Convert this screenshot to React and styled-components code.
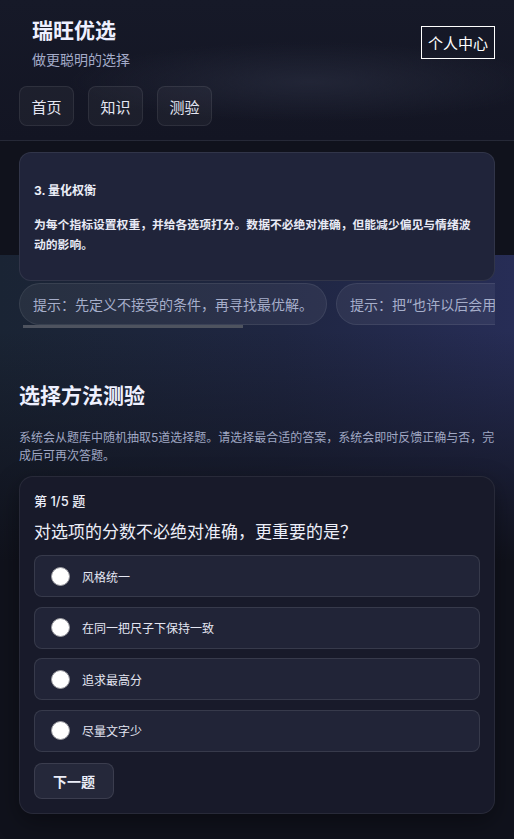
import { useState } from "react";
import styled, { createGlobalStyle } from "styled-components";

const GlobalStyle = createGlobalStyle`
    * { box-sizing: border-box; }
    html, body { margin: 0; padding: 0; background: #10121c; }
    body { font-family: Inter, "Noto Sans CJK SC", sans-serif; color: #e8eaf5; }
`

const Page = styled.div`
    min-height: 839px;
    background: #10121c;
`
const Header = styled.header`
    height: 141px;
    padding: 0 19px;
    border-bottom: 1px solid rgba(255, 255, 255, 0.07);
    background:
        radial-gradient(ellipse 240px 40px at 310px 82px, rgba(38, 42, 60, 0.75), transparent),
        linear-gradient(180deg, #161928, #131523);
`
const TopRow = styled.div`
    display: flex;
    justify-content: space-between;
    align-items: flex-start;
    padding: 16px 0 0 13px;
`
const Brand = styled.div`
    display: flex;
    flex-direction: column;
`
const Title = styled.h1`
    margin: 0;
    font-size: 21px;
    line-height: 30px;
    font-weight: 700;
    color: #eef0ff;
`
const Subtitle = styled.div`
    margin-top: 4px;
    font-size: 14px;
    line-height: 20px;
    color: #a4abc8;
`
const ProfileButton = styled.button`
    margin-top: 10px;
    height: 33px;
    padding: 0 6px;
    background: transparent;
    border: 1px solid #ffffff;
    color: #ffffff;
    font-family: inherit;
    font-size: 15px;
`
const Nav = styled.nav`
    display: flex;
    gap: 14px;
    margin-top: 16px;
`
const NavButton = styled.button`
    height: 40px;
    padding: 0 11.5px;
    border-radius: 8px;
    background: rgba(255, 255, 255, 0.04);
    border: 1px solid rgba(255, 255, 255, 0.08);
    color: #e4e6f2;
    font-family: inherit;
    font-size: 15px;
`
const Main = styled.main`
    padding: 11px 19px 24px;
    background:
        linear-gradient(180deg, #10121c 0, #10121c 114px, rgba(16, 18, 28, 0) 114px, rgba(16, 18, 28, 0) 190px, #10121c 420px),
        linear-gradient(90deg, #1a2434 0%, #1f2642 55%, #272d56 100%);
    background-repeat: no-repeat;
`
const InfoCard = styled.div`
    padding: 28px 14px 25px;
    border-radius: 12px;
    background: #20243a;
    border: 1px solid rgba(255, 255, 255, 0.08);
`
const CardTitle = styled.div`
    font-size: 12px;
    line-height: 20px;
    font-weight: 700;
    color: #eceef8;
`
const CardBody = styled.p`
    margin: 14px 0 0;
    font-size: 11.8px;
    line-height: 20px;
    font-weight: 700;
    color: #e8eaf5;
`
const ChipRow = styled.div`
    display: flex;
    gap: 9px;
    margin-top: 2px;
    overflow: hidden;
`
const Chip = styled.div`
    flex: none;
    height: 42px;
    padding: 0 13px;
    display: flex;
    align-items: center;
    border-radius: 21px;
    background: rgba(255, 255, 255, 0.06);
    border: 1px solid rgba(255, 255, 255, 0.08);
    color: #a6aeca;
    font-size: 14px;
    white-space: nowrap;
`
const ScrollThumb = styled.div`
    width: 220px;
    height: 3px;
    margin-left: 4px;
    background: #4e535f;
`
const SectionTitle = styled.h2`
    margin: 55px 0 0;
    font-size: 21px;
    line-height: 26px;
    font-weight: 700;
    color: #eef0ff;
`
const SectionDesc = styled.p`
    margin: 20px 0 0;
    font-size: 12px;
    line-height: 18px;
    color: #a0a8c4;
`
const QuizCard = styled.div`
    margin-top: 11px;
    padding: 14px;
    border-radius: 14px;
    background: #181a2a;
    border: 1px solid rgba(255, 255, 255, 0.07);
    box-shadow: 0 8px 24px rgba(0, 0, 0, 0.35);
`
const QuizCount = styled.div`
    font-size: 13px;
    line-height: 20px;
    font-weight: 500;
    color: #eceef8;
`
const Question = styled.div`
    margin-top: 8px;
    font-size: 17px;
    line-height: 26px;
    color: #eceef8;
`
const Options = styled.div`
    display: flex;
    flex-direction: column;
    gap: 9.5px;
    margin-top: 10px;
`
const Option = styled.label`
    height: 42px;
    display: flex;
    align-items: center;
    gap: 12px;
    padding-left: 16px;
    border-radius: 8px;
    background: ${p => (p.$active ? "#2a2f4a" : "#212437")};
    border: 1px solid rgba(255, 255, 255, 0.1);
    font-size: 12px;
    color: #e4e6f2;
    cursor: pointer;
`
const Radio = styled.span`
    flex: none;
    width: 19px;
    height: 19px;
    border-radius: 50%;
    background: #ffffff;
    border: 1px solid #9a9aa0;
    box-shadow: ${p => (p.$checked ? "inset 0 0 0 4px #ffffff, inset 0 0 0 10px #3b6cf0" : "none")};
`
const NextButton = styled.button`
    margin-top: 11px;
    height: 36px;
    width: 80px;
    border-radius: 8px;
    background: #25283a;
    border: 1px solid rgba(255, 255, 255, 0.1);
    color: #eceef8;
    font-family: inherit;
    font-size: 14px;
    font-weight: 700;
`

const tips = [
    "提示：先定义不接受的条件，再寻找最优解。",
    "提示：把“也许以后会用”的东西列为次要项。",
]
const options = ["风格统一", "在同一把尺子下保持一致", "追求最高分", "尽量文字少"]

export default function App() {
    const [picked, setPicked] = useState(null)

    return (
        <Page>
            <GlobalStyle />
            <Header>
                <TopRow>
                    <Brand>
                        <Title>瑞旺优选</Title>
                        <Subtitle>做更聪明的选择</Subtitle>
                    </Brand>
                    <ProfileButton>个人中心</ProfileButton>
                </TopRow>
                <Nav>
                    <NavButton>首页</NavButton>
                    <NavButton>知识</NavButton>
                    <NavButton>测验</NavButton>
                </Nav>
            </Header>

            <Main>
                <InfoCard>
                    <CardTitle>3. 量化权衡</CardTitle>
                    <CardBody>为每个指标设置权重，并给各选项打分。数据不必绝对准确，但能减少偏见与情绪波动的影响。</CardBody>
                </InfoCard>
                <ChipRow>
                    {tips.map(t => <Chip key={t}>{t}</Chip>)}
                </ChipRow>
                <ScrollThumb />

                <SectionTitle>选择方法测验</SectionTitle>
                <SectionDesc>系统会从题库中随机抽取5道选择题。请选择最合适的答案，系统会即时反馈正确与否，完成后可再次答题。</SectionDesc>

                <QuizCard>
                    <QuizCount>第 1/5 题</QuizCount>
                    <Question>对选项的分数不必绝对准确，更重要的是？</Question>
                    <Options>
                        {options.map((o, i) => (
                            <Option key={o} $active={picked === i} onClick={() => setPicked(i)}>
                                <Radio $checked={picked === i} />
                                {o}
                            </Option>
                        ))}
                    </Options>
                    <NextButton>下一题</NextButton>
                </QuizCard>
            </Main>
        </Page>
    )
}
